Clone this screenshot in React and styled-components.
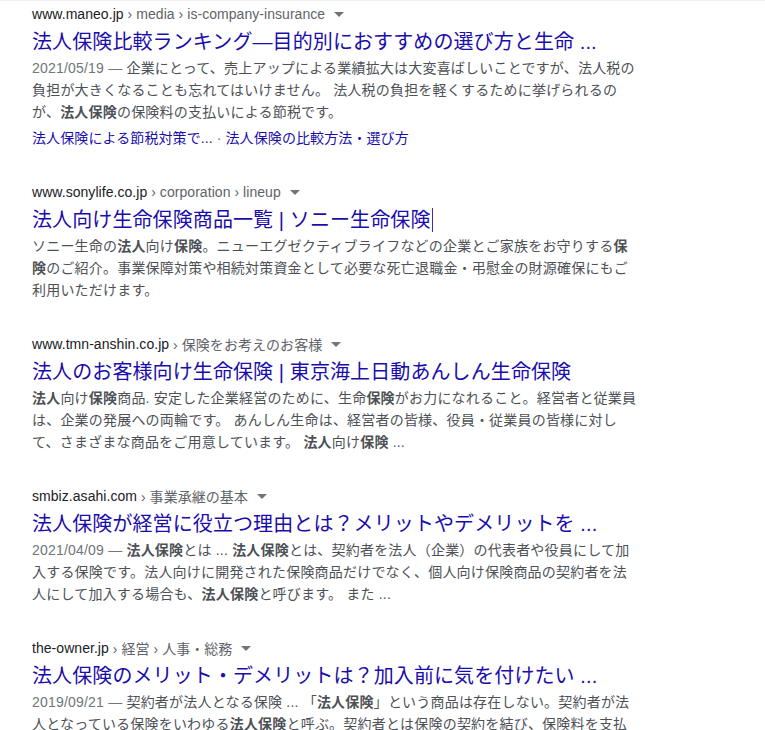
import React from "react";
import styled, { createGlobalStyle } from "styled-components";

const GlobalStyle = createGlobalStyle`
  html, body {
    margin: 0;
    padding: 0;
    background: #fff;
  }
  body {
    font-family: "Liberation Sans", Arial, "Noto Sans CJK JP", sans-serif;
    -webkit-font-smoothing: antialiased;
  }
`;

const results = [
  {
    domain: "www.maneo.jp",
    path: ["media", "is-company-insurance"],
    title: "法人保険比較ランキング―目的別におすすめの選び方と生命 ...",
    date: "2021/05/19",
    lines: [
      "企業にとって、売上アップによる業績拡大は大変喜ばしいことですが、法人税の",
      "負担が大きくなることも忘れてはいけません。 法人税の負担を軽くするために挙げられるの",
      "が、**法人保険**の保険料の支払いによる節税です。",
    ],
    sitelinks: ["法人保険による節税対策で...", "法人保険の比較方法・選び方"],
  },
  {
    domain: "www.sonylife.co.jp",
    path: ["corporation", "lineup"],
    title: "法人向け生命保険商品一覧 | ソニー生命保険",
    caret: true,
    lines: [
      "ソニー生命の**法人**向け**保険**。ニューエグゼクティブライフなどの企業とご家族をお守りする**保**",
      "**険**のご紹介。事業保障対策や相続対策資金として必要な死亡退職金・弔慰金の財源確保にもご",
      "利用いただけます。",
    ],
  },
  {
    domain: "www.tmn-anshin.co.jp",
    path: ["保険をお考えのお客様"],
    title: "法人のお客様向け生命保険 | 東京海上日動あんしん生命保険",
    lines: [
      "**法人**向け**保険**商品. 安定した企業経営のために、生命**保険**がお力になれること。経営者と従業員",
      "は、企業の発展への両輪です。 あんしん生命は、経営者の皆様、役員・従業員の皆様に対し",
      "て、さまざまな商品をご用意しています。 **法人**向け**保険** ...",
    ],
  },
  {
    domain: "smbiz.asahi.com",
    path: ["事業承継の基本"],
    title: "法人保険が経営に役立つ理由とは？メリットやデメリットを ...",
    date: "2021/04/09",
    lines: [
      "**法人保険**とは ... **法人保険**とは、契約者を法人（企業）の代表者や役員にして加",
      "入する保険です。法人向けに開発された保険商品だけでなく、個人向け保険商品の契約者を法",
      "人にして加入する場合も、**法人保険**と呼びます。 また ...",
    ],
  },
  {
    domain: "the-owner.jp",
    path: ["経営", "人事・総務"],
    title: "法人保険のメリット・デメリットは？加入前に気を付けたい ...",
    date: "2019/09/21",
    lines: [
      "契約者が法人となる保険 ... 「**法人保険**」という商品は存在しない。契約者が法",
      "人となっている保険をいわゆる**法人保険**と呼ぶ。契約者とは保険の契約を結び、保険料を支払",
    ],
  },
];

// "**text**" marks the bold search terms
const renderLine = (line) =>
  line.split("**").map((part, i) =>
    i % 2 === 1 ? <Em key={i}>{part}</Em> : <React.Fragment key={i}>{part}</React.Fragment>
  );

const Arrow = () => (
  <ArrowIcon width="10" height="5" viewBox="0 0 10 5" aria-hidden="true">
    <path d="M0 0h10L5 5z" fill="#70757a" />
  </ArrowIcon>
);

const Result = ({ item }) => (
  <StyledResult>
    <UrlRow>
      <Domain>{item.domain}</Domain>
      {item.path.map((p) => (
        <Crumb key={p}>{" › " + p}</Crumb>
      ))}
      <Arrow />
    </UrlRow>
    <Title>
      {item.title}
      {item.caret && <Caret />}
    </Title>
    <Snippet>
      {item.lines.map((line, i) => (
        <Line key={i}>
          {i === 0 && item.date && <DateText>{item.date} — </DateText>}
          {renderLine(line)}
        </Line>
      ))}
    </Snippet>
    {item.sitelinks && (
      <Sitelinks>
        {item.sitelinks.map((s, i) => (
          <React.Fragment key={s}>
            {i > 0 && <Dot> · </Dot>}
            <Sitelink>{s}</Sitelink>
          </React.Fragment>
        ))}
      </Sitelinks>
    )}
  </StyledResult>
);

const App = () => (
  <>
    <GlobalStyle />
    <Page>
      {results.map((r) => (
        <Result key={r.domain} item={r} />
      ))}
    </Page>
  </>
);

const Page = styled.div`
  padding: 3px 0 0 32px;
  min-height: 727px;
  box-shadow: inset 0 1px 0 #f1f1f1;
`;

const StyledResult = styled.div`
  margin-bottom: 32px;
`;

const UrlRow = styled.div`
  display: flex;
  align-items: center;
  height: 22px;
  font-size: 14px;
  letter-spacing: 0.05px;
  white-space: pre;
`;

const Domain = styled.span`
  color: #202124;
`;

const Crumb = styled.span`
  color: #5f6368;
`;

const ArrowIcon = styled.svg`
  margin-left: 9px;
  margin-top: 1px;
`;

const Title = styled.h3`
  margin: 0 0 2px;
  padding-top: 4px;
  font-size: 20px;
  font-weight: 400;
  line-height: 26px;
  letter-spacing: 0.1px;
  color: #1a0dab;
  white-space: nowrap;
`;

const Caret = styled.span`
  display: inline-block;
  width: 1px;
  height: 24px;
  margin-left: 1px;
  background: #3c2fc0;
  vertical-align: -5px;
`;

const Snippet = styled.div`
  font-size: 14px;
  line-height: 22px;
  letter-spacing: 0.2px;
  color: #4d5156;
  white-space: nowrap;
`;

const Line = styled.div``;

const DateText = styled.span`
  color: #70757a;
`;

const Em = styled.b`
  color: #4d5156;
  font-weight: 700;
`;

const Sitelinks = styled.div`
  margin-top: 4px;
  font-size: 14px;
  line-height: 22px;
  letter-spacing: 0.1px;
  white-space: nowrap;
`;

const Sitelink = styled.span`
  color: #1a0dab;
`;

const Dot = styled.span`
  color: #70757a;
`;

export default App;
